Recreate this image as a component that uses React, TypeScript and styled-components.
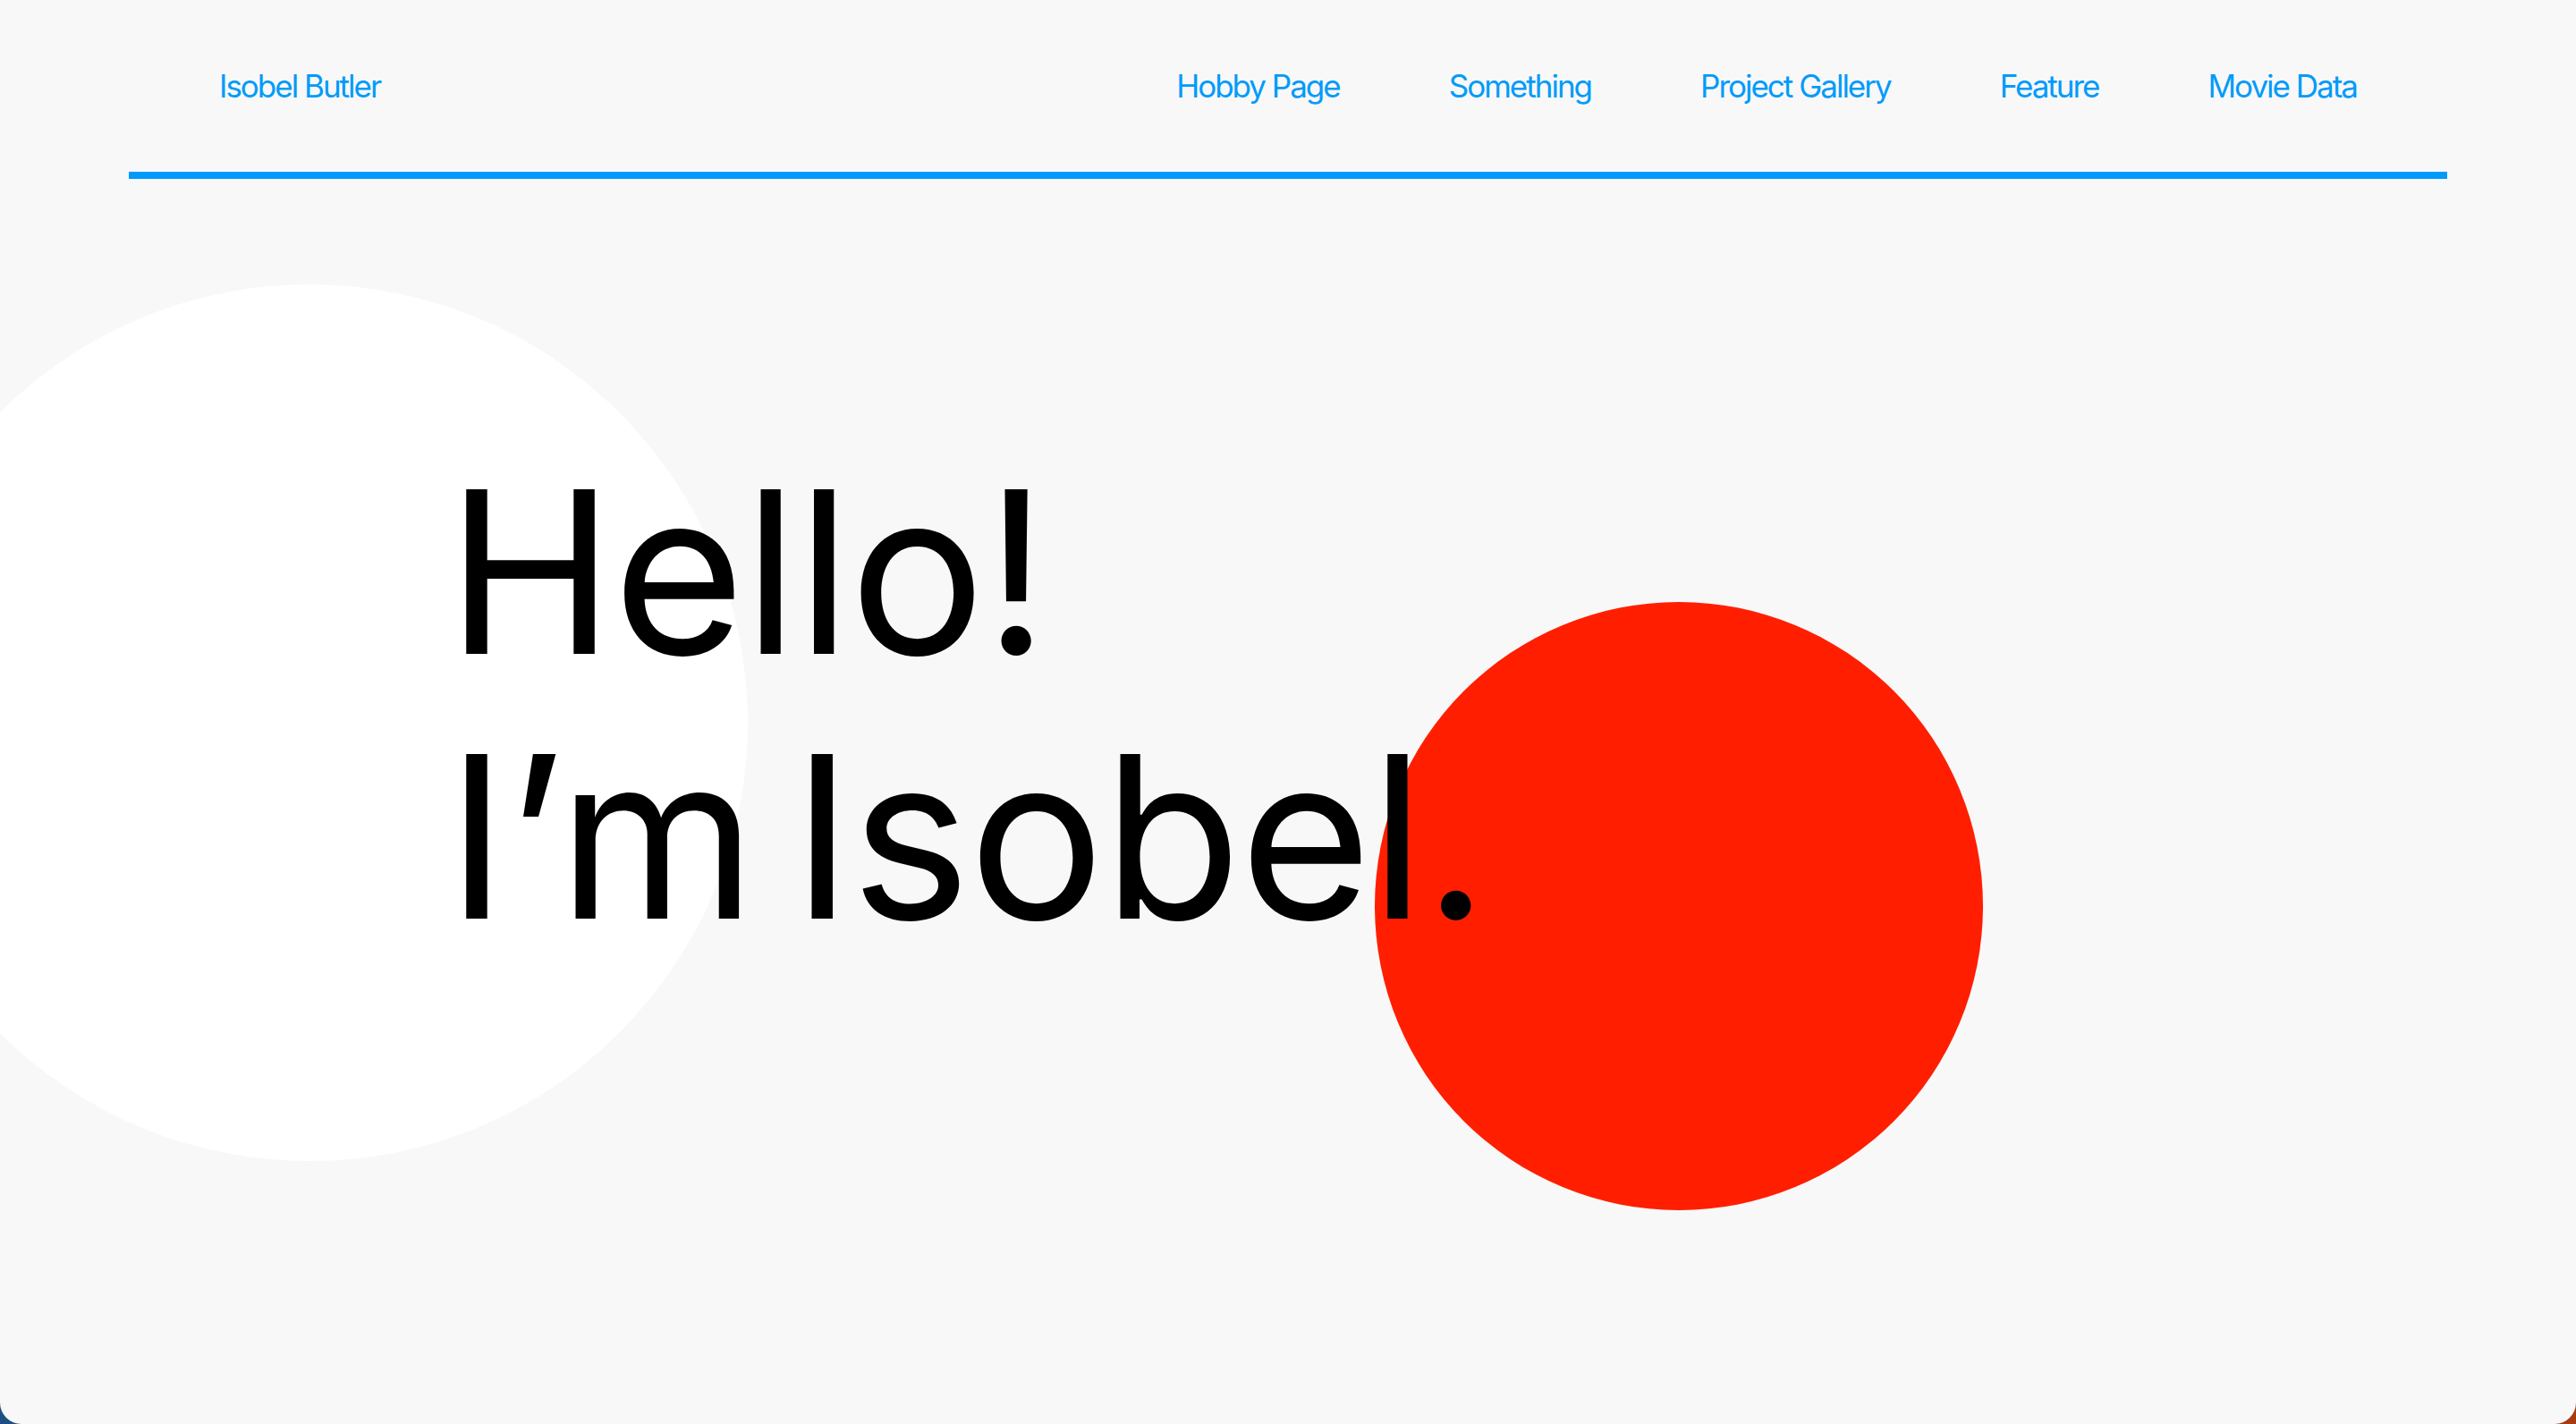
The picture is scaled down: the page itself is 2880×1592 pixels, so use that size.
import React from "react";
import styled, { createGlobalStyle } from "styled-components";

const GlobalStyle = createGlobalStyle`
  html, body {
    margin: 0;
    padding: 0;
  }
  body {
    background: linear-gradient(90deg, #1d4f82 0%, #3b3a5a 50%, #a83a10 100%);
    font-family: Inter, "Liberation Sans", sans-serif;
  }
`;

const Page = styled.div`
  position: relative;
  width: 100%;
  height: 1592px;
  background: #f8f8f8;
  border-radius: 0 0 24px 24px;
  overflow: hidden;
`;

const Header = styled.header`
  position: relative;
  z-index: 2;
  margin: 0 144px;
  height: 192px;
  padding: 0 101px;
  display: flex;
  align-items: center;
  justify-content: space-between;
  border-bottom: 8px solid #009bfa;
`;

const NavLink = styled.a`
  color: #009bfa;
  font-family: Inter, "Liberation Sans", sans-serif;
  font-size: 35px;
  letter-spacing: -2px;
  text-decoration: none;
  line-height: 1;
  white-space: nowrap;
`;

const Nav = styled.nav`
  display: flex;
  align-items: center;
  gap: 122px;
`;

const Hero = styled.section`
  position: relative;
  height: 1392px;
`;

const Circle = styled.div<{ $size: number; $color: string }>`
  position: absolute;
  width: ${(p) => p.$size}px;
  height: ${(p) => p.$size}px;
  border-radius: 50%;
  background: ${(p) => p.$color};
  z-index: 0;
`;

const Heading = styled.h1`
  position: relative;
  z-index: 1;
  margin: 0;
  padding: 291px 0 0 499px;
  font-family: Inter, "Liberation Sans", sans-serif;
  font-weight: 400;
  font-size: 253px;
  line-height: 296px;
  letter-spacing: -1.8px;
  word-spacing: -28px;
  color: #000;
`;

export default function App() {
  return (
    <>
      <GlobalStyle />
      <Page>
        <Header>
          <NavLink href="#">Isobel Butler</NavLink>
          <Nav>
            <NavLink href="#">Hobby Page</NavLink>
            <NavLink href="#">Something</NavLink>
            <NavLink href="#">Project Gallery</NavLink>
            <NavLink href="#">Feature</NavLink>
            <NavLink href="#">Movie Data</NavLink>
          </Nav>
        </Header>
        <Hero>
          <Circle $size={980} $color="#ffffff" style={{ left: -144, top: 118 }} />
          <Circle $size={680} $color="#ff1f00" style={{ left: 1537, top: 473 }} />
          <Heading>
            Hello!
            <br />
            I’m Isobel.
          </Heading>
        </Hero>
      </Page>
    </>
  );
}
